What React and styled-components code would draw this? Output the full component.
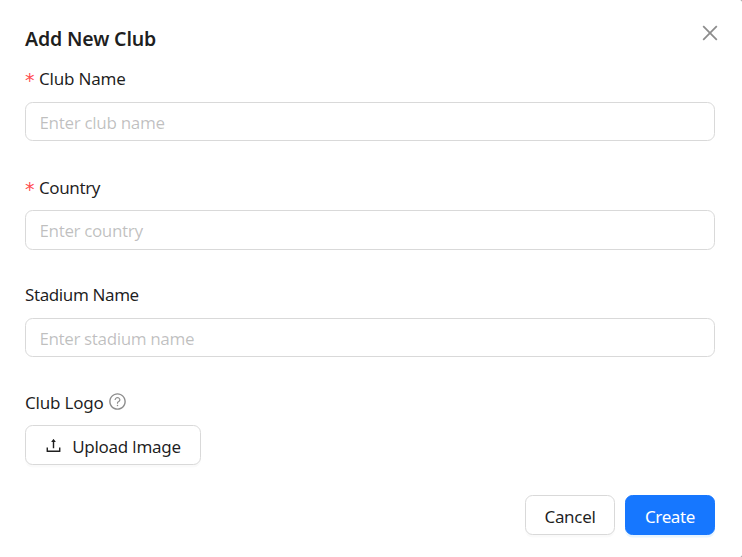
import React from "react";
import styled, { createGlobalStyle } from "styled-components";
import {
  AiOutlineClose,
  AiOutlineQuestionCircle,
  AiOutlineUpload,
} from "react-icons/ai";

const GlobalStyle = createGlobalStyle`
  *, *::before, *::after { box-sizing: border-box; }
  body {
    margin: 0;
    background: #8c8c8c;
    overflow: hidden;
  }
  body, input, button {
    font-family: "Noto Sans", "Open Sans", sans-serif;
    font-size: 17px;
    letter-spacing: -0.45px;
  }
`;

const Modal = styled.section`
  display: flex;
  flex-direction: column;
  height: 557px;
  padding: 25px 27px 22px 25px;
  background: #fff;
  border-radius: 0 2px 2px 0;
  color: rgba(0, 0, 0, 0.88);
`;

const Header = styled.header`
  display: flex;
  flex: none;
  justify-content: space-between;
  height: 40px;
`;

const Title = styled.h1`
  margin: 0;
  font-size: 19.5px;
  font-weight: 600;
  line-height: 28px;
  letter-spacing: -0.15px;
`;

const CloseButton = styled.button`
  display: flex;
  width: 22px;
  height: 22px;
  margin: -3px -6px 0 0;
  padding: 0;
  border: 0;
  background: none;
  color: rgba(0, 0, 0, 0.45);
  font-size: 22px;
`;

const Form = styled.form`
  display: flex;
  flex-direction: column;
  flex: 1;
  min-height: 0;
`;

const Field = styled.div`
  display: flex;
  flex: none;
  flex-direction: column;
  align-items: flex-start;
  height: 108px;

  &:last-child { height: 76px; }
`;

const Label = styled.label`
  display: flex;
  align-items: center;
  height: 28px;
  margin-bottom: ${(p) => p.$gap || 9}px;
  padding-top: ${(p) => p.$drop || 0}px;
  line-height: 28px;
  white-space: nowrap;
  letter-spacing: ${(p) => p.$spacing}px;
`;

const Required = styled.span`
  width: 14px;
  padding-top: 2px;
  color: #ff4d4f;
  font-family: "DejaVu Sans", sans-serif;
  font-size: 19px;
`;

const Help = styled.span`
  display: flex;
  margin: -3px 0 0 4px;
  color: rgba(0, 0, 0, 0.45);
  font-size: 19px;
`;

const Input = styled.input`
  width: 100%;
  height: ${(p) => p.$height}px;
  padding: ${(p) => (p.$height === 40 ? "1px" : "2px")} 14px 0 13.5px;
  border: 1px solid #d9d9d9;
  border-radius: 7.5px;
  background: #fff;
  outline: none;
  letter-spacing: ${(p) => p.$spacing}px;
  &::placeholder { color: rgba(0, 0, 0, 0.25); opacity: 1; }
`;

const Button = styled.button`
  display: flex;
  align-items: center;
  justify-content: center;
  gap: 9px;
  width: ${(p) => p.$width}px;
  height: 40px;
  padding: 3px 0 0;
  border: 1px solid #d9d9d9;
  border-radius: 7.5px;
  background: #fff;
  color: rgba(0, 0, 0, 0.88);
  box-shadow: 0 2.5px 0 rgba(0, 0, 0, 0.02);
  white-space: nowrap;
  letter-spacing: ${(p) => p.$spacing}px;
  svg { margin: -3px 0 0 -1px; font-size: 19px; }
`;

const PrimaryButton = styled(Button)`
  border-color: #1677ff;
  background: #1677ff;
  color: #fff;
  box-shadow: 0 2.5px 0 rgba(5, 145, 255, 0.1);
`;

const PlainCapital = styled.span`
  font-family: "Open Sans", sans-serif;
`;

const Footer = styled.footer`
  display: flex;
  justify-content: flex-end;
  gap: 10px;
`;

const fields = [
  { id: "club", label: "Club Name", placeholder: "Enter club name", required: true, height: 39, ls: -0.2, ps: -0.35, drop: 0 },
  { id: "country", label: "Country", placeholder: "Enter country", required: true, height: 40, ls: -0.4, ps: -0.4, drop: 1 },
  { id: "stadium", label: "Stadium Name", placeholder: "Enter stadium name", height: 39, ls: -0.4, ps: -0.42, drop: 0 },
];

export default function App() {
  return (
    <>
      <GlobalStyle />
      <Modal role="dialog" aria-label="Add New Club">
        <Header>
          <Title>Add New Club</Title>
          <CloseButton aria-label="Close"><AiOutlineClose /></CloseButton>
        </Header>
        <Form>
          {fields.map((f) => (
            <Field key={f.id}>
              <Label htmlFor={f.id} $spacing={f.ls} $drop={f.drop}>
                {f.required && <Required>*</Required>}
                {f.label}
              </Label>
              <Input id={f.id} placeholder={f.placeholder} $height={f.height} $spacing={f.ps} />
            </Field>
          ))}
          <Field>
            <Label as="div" $gap={8} $spacing={-0.2}>
              Club Logo
              <Help><AiOutlineQuestionCircle /></Help>
            </Label>
            <Button type="button" $width={176} $spacing={-0.3}>
              <AiOutlineUpload />
              <span>Upload <PlainCapital>I</PlainCapital>mage</span>
            </Button>
          </Field>
        </Form>
        <Footer>
          <Button type="button" $width={90} $spacing={-0.3}>Cancel</Button>
          <PrimaryButton type="button" $width={90} $spacing={-0.35}>Create</PrimaryButton>
        </Footer>
      </Modal>
    </>
  );
}
